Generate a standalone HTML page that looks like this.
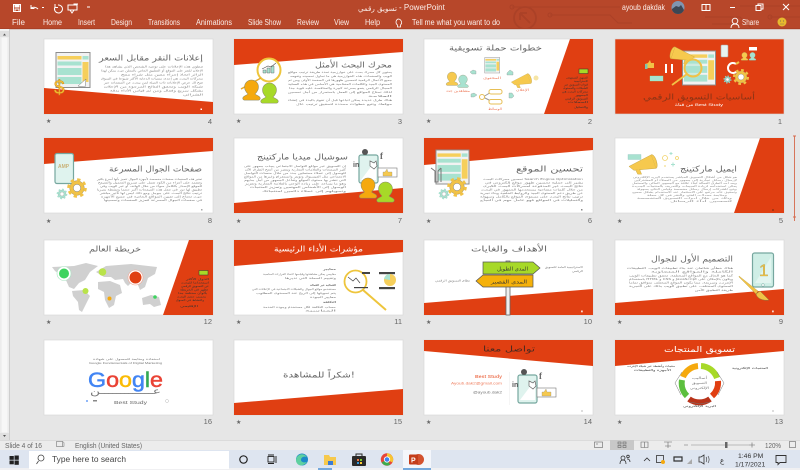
<!DOCTYPE html>
<html lang="en"><head><meta charset="utf-8"><title>PowerPoint</title>
<style>
html,body{margin:0;padding:0;width:800px;height:470px;overflow:hidden;background:#e6e6e6}
svg{display:block;filter:blur(.35px)}
text{font-family:"Liberation Sans","DejaVu Sans",sans-serif}
.ar{font-family:"DejaVu Sans","Liberation Sans",sans-serif}
.t{font-family:"DejaVu Sans","Liberation Sans",sans-serif;font-size:8px;fill:#666}
.b{font-family:"DejaVu Sans","Liberation Sans",sans-serif;font-size:2.800px;fill:#7a7a7a}
.k{font-family:"DejaVu Sans","Liberation Sans",sans-serif;font-size:2.800px;fill:#333}
.r{font-size:8px;fill:#fbeee9}
.n{font-size:7.500px;fill:#666;text-anchor:end}
.s{font-size:6px;fill:#666}
.st{font-size:7px;fill:#666}
</style></head><body>
<svg width="800" height="470" viewBox="0 0 800 470" xmlns="http://www.w3.org/2000/svg">
<defs>
<clipPath id="top"><rect width="800" height="29"/></clipPath>
<symbol id="person" viewBox="0 0 20 24" overflow="visible"><path d="M10 0a8 8 0 0 1 8 8c0 4-3 7-4 8c2 2 6 2 6 5c0 1-1 2-2 2H2c-1 0-2-1-2-2c0-3 4-3 6-5c-1-1-4-4-4-8a8 8 0 0 1 8-8z" stroke="#8a8a6a" stroke-width=".6"/></symbol>
<symbol id="gear" viewBox="-12 -12 24 24" overflow="visible"><circle r="8" stroke="#777" stroke-width=".4"/><circle r="9.200" fill="none" stroke="currentColor" stroke-width="3" stroke-dasharray="3.600 3.600"/><circle r="4" fill="#fff" stroke="#777" stroke-width=".5"/></symbol>
<symbol id="browser" viewBox="0 0 35 36" overflow="visible"><rect x=".5" y=".5" width="34" height="35" fill="#f2f2f2" stroke="#8d8d8d"/><rect x="2" y="4" width="24" height="3.500" fill="#f6cf5b"/><rect x="27" y="4" width="6" height="3.500" fill="#a8e2d0"/><rect x="2" y="9.500" width="24" height="4" fill="#a8e2d0"/><rect x="2" y="16" width="24" height="7" fill="#a8e2d0"/><rect x="2" y="25" width="24" height="7" fill="#a8e2d0"/><rect x="27" y="10" width="6" height="20" fill="#f6cf5b"/></symbol>
<symbol id="mega" viewBox="0 0 34 20" overflow="visible"><path d="M1 13L24 1l5 14L6 17z" fill="#f6c94e" stroke="#b99a3a" stroke-width=".4"/><path d="M24 1c4-1 8 12 5 14" fill="#f6c94e" stroke="#b99a3a" stroke-width=".5"/><path d="M8 17l2 4h4l-2-5" fill="#f6c94e" stroke="#b99a3a" stroke-width=".4"/></symbol>
<symbol id="social" viewBox="0 0 46 36" overflow="visible">
<rect x="7" y="5" width="19" height="28" rx="2" fill="#dff3ee" stroke="#76a79f" stroke-width="1.200"/>
<path d="M9 30L24 10v20z" fill="#fff"/>
<circle cx="13" cy="2" r="3" fill="#555"/><text x="28" y="9" font-size="9" font-weight="bold" fill="#666" style="font-family:'Liberation Serif',serif">f</text>
<text x="1" y="17" font-size="7" font-weight="bold" fill="#555">in</text>
<path d="M18 11l4 2l2-2l1 5l-3 3l-4-3z" fill="#fff" stroke="#666" stroke-width=".7"/>
<rect x="26" y="18" width="19" height="9" fill="#fff" stroke="#777" stroke-width=".6"/><path d="M31 26v-4h2l2-3l1 3h4v4z" fill="#f6c94e" stroke="#888" stroke-width=".3"/>
</symbol>
</defs>

<!-- app background -->
<rect width="800" height="470" fill="#e6e6e6"/>
<rect width="800" height="29" fill="#b7472a"/>
<rect y="28.400" width="800" height=".8" fill="#a23d24"/>
<!-- circuit pattern -->
<g fill="none" stroke="#ab4127" stroke-width="1" clip-path="url(#top)">
<path d="M512 7H620M550 15h60l8 8h14"/>
<circle cx="512" cy="7" r="2"/><circle cx="550" cy="15" r="2"/>
<circle cx="525" cy="18" r="11" stroke-width="1.800"/><path d="M520 13l10 10M520 13h7M520 13v7" stroke-width="1.800"/>
<path d="M705 17h35l12 12M740 6h60M770 17h30M712 24h20"/>
<circle cx="770" cy="17" r="2"/>
</g>
<!-- QAT -->
<g fill="none" stroke="#fff" stroke-width="1">
<rect x="13.500" y="4.500" width="7" height="7"/><rect x="15" y="4.500" width="4" height="2.500" fill="#fff"/><rect x="15" y="9" width="4" height="2.500"/>
<path d="M31 8a5 4 0 0 1 7 1M31 5v3.500h3.500"/><path d="M42 7.500h2"/>
<path d="M58 5a4 4 0 1 1-3 2M55 4v3.500h3"/>
<rect x="68" y="5" width="9" height="5"/><path d="M70 10l2 3l2-3M74 5v-1h4"/><path d="M87 7h3"/>
</g>
<text x="358" y="11" class="ar" font-size="7" fill="#fbeee9" textLength="39" lengthAdjust="spacingAndGlyphs">تسويق رقمي</text>
<text x="399" y="10" font-size="8" fill="#fbeee9">- PowerPoint</text>
<text x="622" y="10" font-size="8" fill="#fbeee9" textLength="43" lengthAdjust="spacingAndGlyphs">ayoub dakdak</text>
<circle cx="678" cy="7.500" r="6.500" fill="#8095b0"/><path d="M672 9l4-3 3 1 2-2 3 5a6.500 6.500 0 0 1-12 0z" fill="#3c4653"/>
<g fill="none" stroke="#fff" stroke-width="1"><rect x="702" y="4.500" width="8" height="6"/><path d="M706 4.500v6"/><path d="M730 7.500h5"/><rect x="756" y="5.500" width="5" height="5"/><path d="M758 5.500v-1.500h5v5h-2"/><path d="M783 4l6 6M789 4l-6 6"/></g>
<!-- ribbon tabs -->
<text x="12" y="25" class="r">File</text>
<text x="43" y="25" class="r" textLength="19" lengthAdjust="spacingAndGlyphs">Home</text>
<text x="78" y="25" class="r" textLength="17" lengthAdjust="spacingAndGlyphs">Insert</text>
<text x="111" y="25" class="r" textLength="21" lengthAdjust="spacingAndGlyphs">Design</text>
<text x="148" y="25" class="r" textLength="32" lengthAdjust="spacingAndGlyphs">Transitions</text>
<text x="196" y="25" class="r" textLength="36" lengthAdjust="spacingAndGlyphs">Animations</text>
<text x="248" y="25" class="r" textLength="33" lengthAdjust="spacingAndGlyphs">Slide Show</text>
<text x="297" y="25" class="r" textLength="22" lengthAdjust="spacingAndGlyphs">Review</text>
<text x="334" y="25" class="r" textLength="15" lengthAdjust="spacingAndGlyphs">View</text>
<text x="365" y="25" class="r" textLength="15" lengthAdjust="spacingAndGlyphs">Help</text>
<path d="M398 19a3.500 3.500 0 0 1 2.500 6v2h-3v-2a3.500 3.500 0 0 1 .5-6z" fill="none" stroke="#fff" stroke-width=".8"/>
<text x="412" y="25" class="r" textLength="88" lengthAdjust="spacingAndGlyphs">Tell me what you want to do</text>
<circle cx="735" cy="21" r="2.800" fill="none" stroke="#fff" stroke-width=".9"/><path d="M731 28c0-3 2-4 4-4s4 1 4 4" fill="none" stroke="#fff" stroke-width=".9"/>
<text x="742" y="25" class="r" textLength="17" lengthAdjust="spacingAndGlyphs">Share</text>
<circle cx="782" cy="22" r="4.500" fill="#e7b92e"/><circle cx="780.500" cy="21" r=".6" fill="#875"/><circle cx="783.500" cy="21" r=".6" fill="#875"/><path d="M780 24h4" stroke="#875" stroke-width=".5"/>

<!-- left scrollbar -->
<rect x="0" y="29" width="9" height="412" fill="#f1f1f1"/>
<rect x="9" y="29" width=".8" height="412" fill="#c9c9c9"/>
<rect x="0" y="31" width="9" height="6" fill="#e0e0e0"/><path d="M3 35.500l1.500-2 1.500 2z" fill="#555"/>
<rect x="0" y="433" width="9" height="7" fill="#e0e0e0"/><path d="M3 435l1.500 2 1.500-2z" fill="#555"/>
<rect x="1" y="37" width="7" height="396" fill="#f7f7f7" stroke="#ddd" stroke-width=".5"/>
<!-- right range mark -->
<path d="M794.500 136v85M793 136h3M793 217h3" stroke="#d5694c" stroke-width=".9" fill="none"/>

<!-- ROW 1 -->
<!-- slide 4 -->
<rect x="44" y="39" width="169" height="75" fill="#fff" stroke="#d6d6d6" stroke-width=".6"/>
<path d="M44 88L213 102V114H44z" fill="#e03f12"/>
<use href="#browser" x="55.500" y="52" width="35" height="36"/>
<path d="M78 86l8-7-1 8z" fill="#fff" stroke="#777" stroke-width=".5"/>
<text x="54" y="94" font-size="19" fill="#f4c534" stroke="#d68a20" stroke-width=".5">$</text>
<text x="99" y="60.500" class="t" textLength="104" lengthAdjust="spacingAndGlyphs">إعلانات النقر مقابل السعر</text>
<g>
<text class="b" x="105" y="67.500" textLength="98" lengthAdjust="spacingAndGlyphs">تنطوي هذه الإعلانات على توجيه الشخص الذي يشاهد هذا</text>
<text class="b" x="101" y="71.500" textLength="102" lengthAdjust="spacingAndGlyphs">الإعلان للنقر على الموقع أو التطبيق الخاص بالمعلن حيث يمكن لهذا</text>
<text class="b" x="121" y="75.500" textLength="82" lengthAdjust="spacingAndGlyphs">الزائر اتخاذ إجراء معين مثل شراء منتج</text>
<text class="b" x="101" y="79.500" textLength="102" lengthAdjust="spacingAndGlyphs">محركات البحث هي إحدى منصات الدعاية الأكثر شيوعا في السوق</text>
<text class="b" x="104" y="83.500" textLength="99" lengthAdjust="spacingAndGlyphs">تتيح لك عرض الإعلانات ذات الصلة لمن يبحث عن المنتجات عبر</text>
<text class="b" x="104" y="87.500" textLength="99" lengthAdjust="spacingAndGlyphs">شبكة الويب وتحقق النتائج المرجوة من الإعلان</text>
<text class="b" x="110" y="91.500" textLength="93" lengthAdjust="spacingAndGlyphs">بشكل سريع وفعال ومن ثم قياس الأداء بدقة</text>
<text class="b" x="183" y="95.500" textLength="20" lengthAdjust="spacingAndGlyphs">الشرائي</text>
</g>
<rect x="200.500" y="108.500" width="1.500" height="1.500" fill="#fff"/>
<text x="46" y="123" class="s">★</text><text x="212" y="124" class="n">4</text>

<!-- slide 3 -->
<rect x="234" y="39" width="169" height="75" fill="#fff" stroke="#d6d6d6" stroke-width=".6"/>
<path d="M234 39H403V52L234 65z" fill="#e03f12"/>
<text x="315" y="67.500" class="t" textLength="77" lengthAdjust="spacingAndGlyphs">محرك البحث الأمثل</text>
<g>
<text class="b" x="288" y="73" textLength="104" lengthAdjust="spacingAndGlyphs">يحتوي كل محرك بحث على خوارزمية تحدد طريقة ترتيب مواقع</text>
<text class="b" x="290" y="77" textLength="102" lengthAdjust="spacingAndGlyphs">الويب والصفحات. هذه الخوارزمية هي ما تحاول تحسينه وتفهمه</text>
<text class="b" x="288" y="81" textLength="104" lengthAdjust="spacingAndGlyphs">جميع الأعمال الرقمية لتحسين ظهورها في الصفحة الأولى ومن ثم</text>
<text class="b" x="288" y="85" textLength="104" lengthAdjust="spacingAndGlyphs">المحتوى الجيد والكلمات المفتاحية هي الأساس في هذه العملية</text>
<text class="b" x="289" y="89" textLength="103" lengthAdjust="spacingAndGlyphs">المجال الرقمي ينمو بسرعة كبيرة والمنافسة عليه قوية جدا</text>
<text class="b" x="288" y="93" textLength="104" lengthAdjust="spacingAndGlyphs">لذلك تحتاج المواقع إلى العمل باستمرار من أجل تحسين</text>
<text class="b" x="368" y="97" textLength="24" lengthAdjust="spacingAndGlyphs">العلامة</text>
<text class="b" x="288" y="101" textLength="104" lengthAdjust="spacingAndGlyphs">هناك طرق عديدة يمكن اتباعها قبل أن تقوم بالبدء في إنشاء</text>
<text class="b" x="296" y="105" textLength="96" lengthAdjust="spacingAndGlyphs">موقعك وتتبع خطوات محددة لتحقيق ترتيب عال</text>
</g>
<circle cx="269" cy="70" r="11.500" fill="#fff" stroke="#eec53c" stroke-width="2"/>
<path d="M261 78l-20 11" stroke="#e5a92c" stroke-width="1.500"/>
<path d="M263 73v-3h3v3zM267 73v-5h3v5zM271 73v-7h3v7z" fill="#a8e2d0" stroke="#555" stroke-width=".4"/><path d="M262 69l6-3 3 1 5-4" stroke="#555" fill="none" stroke-width=".6"/>
<use href="#person" x="242.500" y="80" width="18" height="21" fill="#f5a90e"/>
<use href="#person" x="260" y="83" width="19" height="21" fill="#a7d928"/>
<text x="236" y="123" class="s">★</text><text x="402" y="124" class="n">3</text>

<!-- slide 2 -->
<rect x="424" y="39" width="169" height="75" fill="#fff" stroke="#d6d6d6" stroke-width=".6"/>
<path d="M570 39H593V114H544z" fill="#e03f12"/>
<text x="449" y="50.500" class="t" textLength="93" lengthAdjust="spacingAndGlyphs">خطوات حملة تسويقية</text>
<use href="#browser" x="484.500" y="57" width="15.500" height="16.500"/>
<text x="483" y="79" class="ar" font-size="3.500" fill="#ee7a5a" textLength="18" lengthAdjust="spacingAndGlyphs">المحتوى</text>
<use href="#mega" x="510" y="73" width="25" height="14"/>
<circle cx="536" cy="78" r="2.500" fill="#f6e5a6"/>
<text x="516" y="91" class="ar" font-size="3.500" fill="#ee7a5a" textLength="13" lengthAdjust="spacingAndGlyphs">الإعلان</text>
<path d="M483 97l10-6M483 97l10 5" stroke="#999" stroke-width="1"/>
<rect x="489" y="89.500" width="13" height="4.500" rx="2" fill="#fff" stroke="#e7bf55" stroke-width="1"/>
<rect x="489" y="99.500" width="13" height="4.500" rx="2" fill="#fff" stroke="#e7bf55" stroke-width="1"/>
<circle cx="482" cy="97" r="2.500" fill="#fff" stroke="#e7bf55"/>
<text x="488" y="110" class="ar" font-size="3.500" fill="#ee7a5a" textLength="14" lengthAdjust="spacingAndGlyphs">الوسائط</text>
<use href="#person" x="446" y="72" width="12" height="14" fill="#f6c94e"/>
<use href="#person" x="457" y="75" width="12" height="13" fill="#a8e2d0"/>
<text x="446" y="92" class="ar" font-size="3.500" fill="#ee7a5a" textLength="24" lengthAdjust="spacingAndGlyphs">مشاهدين جدد</text>
<g fill="#a8e2d0" stroke="#888" stroke-width=".3"><path d="M470 72l3-2 3 1v3h-4z"/><path d="M507 73l3-3 3 2v3h-6z"/><path d="M471 94l3-1 3 2-3 2h-3z"/><path d="M509 93l3 0 2 3-2 2h-3z"/></g>
<rect x="579" y="69" width="9" height="4.500" fill="#a7d928" stroke="#333" stroke-width=".5"/>
<text class="k" x="566" y="78.500" textLength="22" lengthAdjust="spacingAndGlyphs">الجمهور المستهدف</text>
<text class="k" x="574" y="82" textLength="14" lengthAdjust="spacingAndGlyphs">الاستراتيجية</text>
<text class="k" x="564" y="85.500" textLength="24" lengthAdjust="spacingAndGlyphs">قنوات التسويق عبر</text>
<text class="k" x="563" y="89" textLength="25" lengthAdjust="spacingAndGlyphs">الشبكات والمحتوى</text>
<text class="k" x="562" y="92.500" textLength="26" lengthAdjust="spacingAndGlyphs">محركات البحث هي</text>
<text class="k" x="575" y="96" textLength="13" lengthAdjust="spacingAndGlyphs">الجمهور</text>
<text class="k" x="565" y="99.500" textLength="23" lengthAdjust="spacingAndGlyphs">التسويق الرقمي</text>
<text class="k" x="568" y="103" textLength="20" lengthAdjust="spacingAndGlyphs">الحملات</text>
<text class="k" x="574" y="108" textLength="14" lengthAdjust="spacingAndGlyphs">والتحليل</text>
<text x="426" y="123" class="s">★</text><text x="592" y="124" class="n">2</text>

<!-- slide 1 -->
<rect x="615" y="39" width="169" height="75" fill="#e03f12" stroke="#d6d6d6" stroke-width=".6"/>
<use href="#browser" x="682" y="50" width="34" height="36"/>
<use href="#mega" transform="translate(696 46) scale(-1 1)" width="30" height="17" x="0" y="0"/>
<circle cx="693" cy="68" r="8.500" fill="#a8e2d0" fill-opacity=".5" stroke="#f1c246" stroke-width="2"/>
<path d="M687 74l-15 11" stroke="#f1c246" stroke-width="1.800"/>
<rect x="721" y="45" width="7" height="12" rx="1" fill="#e8f4f1" stroke="#aaa" stroke-width=".6"/>
<rect x="749" y="47" width="8" height="3.500" fill="#fff"/>
<use href="#person" x="741" y="52" width="7" height="9" fill="#f6c94e"/>
<use href="#person" x="749" y="52" width="7" height="9" fill="#a8e2d0"/>
<path d="M645 64l3-1 2-3 1 3h3v5h-9z" fill="#f1c246"/><rect x="645" y="64" width="2.500" height="5" fill="#7fc4b1"/>
<path d="M666 64v9M672 64v9" stroke="#fff" stroke-width="2"/>
<rect x="650" y="76" width="13" height="5" fill="#a8e2d0" stroke="#7fb" stroke-width=".3"/>
<path d="M736 64a5 5 0 1 0 1 7" fill="none" stroke="#fff" stroke-width="2"/><path d="M736 64l3-2" stroke="#f1c246" stroke-width="2"/>
<use href="#gear" x="732" y="68" width="18" height="18" fill="#f1c246" color="#f1c246"/>
<use href="#gear" x="723" y="75" width="9" height="9" fill="#8fd3c5" color="#8fd3c5"/>
<text x="643" y="99.500" class="t" style="fill:#8a3416" textLength="112" lengthAdjust="spacingAndGlyphs">أساسيات التسويق الرقمي</text>
<text x="675" y="106" font-size="4" fill="#fff" textLength="48" lengthAdjust="spacingAndGlyphs">من قناة Best Study</text>
<text x="782" y="124" class="n">1</text>

<!-- ROW 2 -->
<!-- slide 8 -->
<rect x="44" y="138" width="169" height="75" fill="#fff" stroke="#d6d6d6" stroke-width=".6"/>
<path d="M44 138H213V151L44 164z" fill="#e03f12"/>
<rect x="55" y="153.500" width="18.500" height="30" rx="2" fill="#dff3ee" stroke="#76a79f" stroke-width="1.200"/>
<text x="58" y="168" font-size="5" font-weight="bold" fill="#c9b37a">AMP</text>
<use href="#gear" x="66" y="177" width="22" height="22" fill="#f1c246" color="#f1c246"/>
<use href="#gear" x="56" y="188" width="12" height="12" fill="#a8e2d0" color="#a8e2d0"/>
<text x="109" y="171.500" class="t" textLength="93" lengthAdjust="spacingAndGlyphs">صفحات الجوال المسرعة</text>
<g>
<text class="b" x="97" y="180" textLength="105" lengthAdjust="spacingAndGlyphs">تعتبر هذه الصفحات صفحات مخصصة لأجهزة الجوال تتميز بأنها أسرع بكثير</text>
<text class="b" x="98" y="183.500" textLength="104" lengthAdjust="spacingAndGlyphs">وتعتمد على أجزاء من الكود تعمل على تسريع التحميل والتصفح</text>
<text class="b" x="100" y="187" textLength="102" lengthAdjust="spacingAndGlyphs">للموقع الإصدار بالكامل سواء من خلال الهاتف أو عبر الويب وفي</text>
<text class="b" x="97" y="190.500" textLength="105" lengthAdjust="spacingAndGlyphs">تطبيق لها دور في جعل هذه الصفحات أكبر حجما ونشطة بصريا</text>
<text class="b" x="100" y="194" textLength="102" lengthAdjust="spacingAndGlyphs">ترتيب نتائج البحث على جوجل ومع ذلك ليس لها تأثير مباشر</text>
<text class="b" x="101" y="197.500" textLength="101" lengthAdjust="spacingAndGlyphs">حيث تحتاج إلى تعيين المواقع الخاصة في جميع الأجهزة</text>
<text class="b" x="104" y="201" textLength="98" lengthAdjust="spacingAndGlyphs">في صفحات الجوال المسرعة لتعزيز الصفحات وتحسينها</text>
</g>
<rect x="201" y="209" width="1.500" height="1.500" fill="#aaa"/>
<text x="46" y="223" class="s">★</text><text x="212" y="223" class="n">8</text>

<!-- slide 7 -->
<rect x="234" y="138" width="169" height="75" fill="#fff" stroke="#d6d6d6" stroke-width=".6"/>
<path d="M234 203L403 188V213H234z" fill="#e03f12"/>
<text x="257" y="159.500" class="t" textLength="91" lengthAdjust="spacingAndGlyphs">سوشيال ميديا ماركتينج</text>
<g>
<text class="b" x="244" y="167" textLength="102" lengthAdjust="spacingAndGlyphs">إن التسويق عبر مواقع التواصل الاجتماعي يجذب جمهور على</text>
<text class="b" x="245" y="170.500" textLength="101" lengthAdjust="spacingAndGlyphs">كثير الصفحات والعلامات التجارية ويعتبر من أنجح الطرق الآن</text>
<text class="b" x="244" y="174" textLength="102" lengthAdjust="spacingAndGlyphs">للوصول إلى عملاء محتملين جدد من خلال منصات التواصل</text>
<text class="b" x="244" y="177.500" textLength="102" lengthAdjust="spacingAndGlyphs">الاجتماعي مثل الفيسبوك وتويتر وانستغرام وغيرها من المواقع</text>
<text class="b" x="244" y="181" textLength="102" lengthAdjust="spacingAndGlyphs">التي تنشر بها محتوى الموقع وتفاعل الجمهور من أجل جذبهم</text>
<text class="b" x="245" y="184.500" textLength="101" lengthAdjust="spacingAndGlyphs">وهو ما يساعد على زيادة الوعي بالعلامة التجارية وتعزيز</text>
<text class="b" x="250" y="188" textLength="96" lengthAdjust="spacingAndGlyphs">الوصول إلى الأشخاص المهتمين وتعزيز المنتجات</text>
<text class="b" x="262" y="192" textLength="84" lengthAdjust="spacingAndGlyphs">وتحويلهم إلى عملاء دائمين لمنتجاتك</text>
</g>
<use href="#social" x="352" y="150" width="46" height="36"/>
<use href="#person" x="359" y="178" width="18" height="21" fill="#f5a90e"/>
<use href="#person" x="376" y="182" width="19" height="21" fill="#a7d928"/>
<text x="236" y="223" class="s">★</text><text x="402" y="223" class="n">7</text>

<!-- slide 6 -->
<rect x="424" y="138" width="169" height="75" fill="#fff" stroke="#d6d6d6" stroke-width=".6"/>
<path d="M424 138H593V150L424 165z" fill="#e03f12"/>
<use href="#browser" x="435.500" y="149" width="34" height="36"/>
<path d="M431 168l4 3v11h3v-11l3-3M441 168v14" stroke="#777" stroke-width="1" fill="none"/>
<use href="#gear" x="446" y="176" width="22" height="22" fill="#f1c246" color="#f1c246"/>
<use href="#gear" x="438" y="188" width="12" height="12" fill="#a8e2d0" color="#a8e2d0"/>
<text x="516" y="171.500" class="t" textLength="67" lengthAdjust="spacingAndGlyphs">تحسين الموقع</text>
<g>
<text class="b" x="483" y="180" textLength="100" lengthAdjust="spacingAndGlyphs">تحسين محركات البحث Search Engine Optimization</text>
<text class="b" x="485" y="183.500" textLength="98" lengthAdjust="spacingAndGlyphs">يشير إلى عملية تحسين ظهور موقع إلكتروني في</text>
<text class="b" x="483" y="187" textLength="100" lengthAdjust="spacingAndGlyphs">نتائج البحث غير المدفوعة لمحركات البحث الكبرى</text>
<text class="b" x="481" y="190.500" textLength="102" lengthAdjust="spacingAndGlyphs">من خلال كلمات مفتاحية يستخدمها الجمهور في البحث</text>
<text class="b" x="480" y="194" textLength="103" lengthAdjust="spacingAndGlyphs">عن طريق دعم المحتوى الجيد والروابط الخلفية وبناء تجربة</text>
<text class="b" x="480" y="197.500" textLength="103" lengthAdjust="spacingAndGlyphs">ترتيب نتائج البحث على مستوى الموقع بالكامل وسهولة</text>
<text class="b" x="480" y="201" textLength="103" lengthAdjust="spacingAndGlyphs">والتحليلات في المواقع فهو عامل مهم في النجاح</text>
</g>
<rect x="581" y="209" width="1.500" height="1.500" fill="#888"/>
<text x="426" y="223" class="s">★</text><text x="592" y="223" class="n">6</text>

<!-- slide 5 -->
<rect x="615" y="138" width="169" height="75" fill="#fff" stroke="#d6d6d6" stroke-width=".6"/>
<path d="M760 138H784V213H734z" fill="#e03f12"/>
<use href="#mega" x="628" y="153" width="33" height="21"/>
<rect x="628" y="154.500" width="13" height="5" fill="#a8e2d0" stroke="#8bb" stroke-width=".3"/>
<circle cx="665" cy="158" r="2.500" fill="#fff" stroke="#f1d368" stroke-width=".8"/><circle cx="677" cy="158" r="1.500" fill="none" stroke="#f1d368" stroke-width=".8"/>
<path d="M671 152v3M669.500 153.500h3M673 162.500v4M671 164.500h4" stroke="#a8e2d0" stroke-width="1"/>
<circle cx="665" cy="166" r="1" fill="#f6e5a6"/>
<text x="680" y="171.500" class="t" textLength="57" lengthAdjust="spacingAndGlyphs">ايميل ماركتينج</text>
<g>
<text class="b" style="font-size:2.400px;fill:#8c8c8c" x="633" y="178" textLength="104" lengthAdjust="spacingAndGlyphs">هو شكل من أشكال التسويق المباشر يستخدم البريد الإلكتروني</text>
<text class="b" style="font-size:2.400px;fill:#8c8c8c" x="634" y="181" textLength="103" lengthAdjust="spacingAndGlyphs">لإرسال رسائل تجارية إلى جمهور من العملاء أو المشتركين</text>
<text class="b" style="font-size:2.400px;fill:#8c8c8c" x="632" y="184" textLength="105" lengthAdjust="spacingAndGlyphs">ويعد أحد الطرق الفعالة لبناء علاقة مع الجمهور الحالي والمحتمل</text>
<text class="b" style="font-size:2.400px;fill:#8c8c8c" x="632" y="187" textLength="105" lengthAdjust="spacingAndGlyphs">يمكن استخدامه لزيادة المبيعات والتعريف بالمنتجات الجديدة</text>
<text class="b" style="font-size:2.400px;fill:#8c8c8c" x="637" y="190" textLength="100" lengthAdjust="spacingAndGlyphs">ويتيح للشركات إرسال رسائل مخصصة وقياس النتائج بسهولة</text>
<text class="b" style="font-size:2.400px;fill:#8c8c8c" x="632" y="193" textLength="105" lengthAdjust="spacingAndGlyphs">وتحقيق عائد مرتفع على الاستثمار عند الاستخدام بشكل صحيح</text>
<text class="b" style="font-size:2.400px;fill:#8c8c8c" x="647" y="196" textLength="80" lengthAdjust="spacingAndGlyphs">ومتابعة معدلات الفتح والنقر في كل حملة</text>
<text class="b" style="font-size:2.400px;fill:#8c8c8c" x="637" y="199" textLength="95" lengthAdjust="spacingAndGlyphs">وذلك من خلال أدوات التسويق المتخصصة</text>
<text class="b" style="font-size:2.400px;fill:#8c8c8c" x="670" y="202" textLength="62" lengthAdjust="spacingAndGlyphs">لتحسين أداء الرسائل</text>
</g>
<rect x="772" y="209" width="2" height="2" fill="#a8350f"/>
<text x="617" y="223" class="s">★</text><text x="783" y="223" class="n">5</text>

<!-- ROW 3 -->
<!-- slide 12 -->
<rect x="44" y="240" width="169" height="75" fill="#fff" stroke="#d6d6d6" stroke-width=".6"/>
<path d="M189 240H213V315H163z" fill="#e03f12"/>
<text x="89" y="251.500" class="t" textLength="52" lengthAdjust="spacingAndGlyphs">خريطة العالم</text>
<g fill="#d0d0d0">
<path d="M52 267l22-1 12-3 12 3-8 6-5 8-6 3-5 6-5-2-4-9-10-7z"/>
<path d="M72 291l12-1 6 6-4 8-4 8-3-2-1-8-5-6z"/>
<path d="M96 272l10-6 25-2 26 3-2 7-7 4-3 9-5 3-2-5-6-3-4 4-3-3-2-4-8 1-4-3-7 0z"/>
<path d="M98 282l12-1 10 4 2 8-6 3-2 9-5 3-4-8-1-8-6-3z"/>
<path d="M142 298l9-3 8 2 2 8-7 2-4-3-7 1z"/>
</g>
<circle cx="64" cy="273.500" r="7" fill="#fff" stroke="#a8e2c0" stroke-width=".6"/><circle cx="64" cy="273.500" r="5" fill="#3ed35f"/>
<circle cx="102.500" cy="272" r="3.800" fill="#b9e34a"/>
<circle cx="135.500" cy="277.500" r="7.500" fill="#fff" stroke="#eda493" stroke-width=".6"/><circle cx="135.500" cy="277.500" r="6" fill="#e03f12"/>
<circle cx="85.500" cy="291" r="3" fill="#b9e34a"/><circle cx="109.500" cy="298.500" r="2" fill="#f5a90e"/><circle cx="155" cy="297" r="1.800" fill="#3ed35f"/>
<rect x="199" y="270.500" width="9" height="4.500" fill="#a7d928" stroke="#333" stroke-width=".5"/>
<text class="k" x="186" y="280" textLength="23" lengthAdjust="spacingAndGlyphs">الدول الأكثر</text>
<text class="k" x="181" y="283.500" textLength="28" lengthAdjust="spacingAndGlyphs">استخداما للبحث</text>
<text class="k" x="181" y="287" textLength="28" lengthAdjust="spacingAndGlyphs">عن التسويق الرقمي</text>
<text class="k" x="180" y="290.500" textLength="28" lengthAdjust="spacingAndGlyphs">تظهر في الخريطة</text>
<text class="k" x="178" y="294" textLength="29" lengthAdjust="spacingAndGlyphs">بألوان مختلفة جدا</text>
<text class="k" x="177" y="297.500" textLength="29" lengthAdjust="spacingAndGlyphs">بحسب حجم البحث</text>
<text class="k" x="176" y="301" textLength="28" lengthAdjust="spacingAndGlyphs">والنشاط في السوق</text>
<text class="k" x="180" y="307" textLength="18" lengthAdjust="spacingAndGlyphs">الإقليمي</text>
<text x="46" y="324" class="s">★</text><text x="212" y="324" class="n">12</text>

<!-- slide 11 -->
<rect x="234" y="240" width="169" height="75" fill="#fff" stroke="#d6d6d6" stroke-width=".6"/>
<path d="M234 240H403V252L234 266z" fill="#e03f12"/>
<text x="274" y="251.500" class="t" style="fill:#fff" textLength="89" lengthAdjust="spacingAndGlyphs">مؤشرات الأداء الرئيسية</text>
<g>
<text class="b" style="font-weight:bold" x="323" y="270" textLength="13" lengthAdjust="spacingAndGlyphs">معايير</text>
<text class="b" x="263" y="275" textLength="73" lengthAdjust="spacingAndGlyphs">مقاييس يمكن مشاهدتها وقياسها لاتخاذ القرارات المناسبة</text>
<text class="b" x="285" y="279" textLength="51" lengthAdjust="spacingAndGlyphs">وتقييم الحملة التي تديرها</text>
<text class="b" style="font-weight:bold" x="310" y="286" textLength="26" lengthAdjust="spacingAndGlyphs">الفعالية غير الفعالة</text>
<text class="b" x="252" y="290" textLength="84" lengthAdjust="spacingAndGlyphs">مستخدمو مواقع الجوال والشبكات الاجتماعية في الإعلانات التي</text>
<text class="b" x="256" y="294" textLength="80" lengthAdjust="spacingAndGlyphs">يتم تحويلها إلى الربح عند المستوى المطلوب</text>
<text class="b" x="310" y="298" textLength="26" lengthAdjust="spacingAndGlyphs">معايير الجودة</text>
<text class="b" style="font-weight:bold" x="323" y="303" textLength="13" lengthAdjust="spacingAndGlyphs">التكلفة</text>
<text class="b" x="263" y="308" textLength="73" lengthAdjust="spacingAndGlyphs">حساب التكلفة لكل مستخدم وجودة الخدمة</text>
<text class="b" x="305" y="311.500" textLength="31" lengthAdjust="spacingAndGlyphs">المناسبة</text>
</g>
<circle cx="355.500" cy="281.500" r="11" fill="#fff" stroke="#eec53c" stroke-width="1.800"/>
<path d="M363 290l23 20" stroke="#eec53c" stroke-width="2"/>
<path d="M348 277l5 4 3-3 4 5" stroke="#444" fill="none" stroke-width=".7"/>
<rect x="362" y="272" width="8" height="2" fill="#444"/><rect x="354" y="287" width="14" height="1.200" fill="#444"/>
<rect x="379" y="272" width="16" height="2.200" fill="#444"/><rect x="379" y="287" width="16" height="2.200" fill="#444"/>
<circle cx="390" cy="280" r="6" fill="#f6cf5b"/><path d="M390 280v-6a6 6 0 0 0-6 5z" fill="#a8e2d0"/>
<text x="236" y="324" class="s">★</text><text x="402" y="324" class="n">11</text>

<!-- slide 10 -->
<rect x="424" y="240" width="169" height="75" fill="#fff" stroke="#d6d6d6" stroke-width=".6"/>
<path d="M424 303L593 289V315H424z" fill="#e03f12"/>
<text x="471" y="251.500" class="t" textLength="76" lengthAdjust="spacingAndGlyphs">الأهداف والغايات</text>
<rect x="506" y="261" width="4" height="54" fill="#eee" stroke="#666" stroke-width=".8"/>
<path d="M483 262H533L540 268L533 274H483z" fill="#a7d928" stroke="#555" stroke-width=".7"/>
<path d="M483 275H533V287H483L476 281z" fill="#f5b10a" stroke="#555" stroke-width=".7"/>
<text x="497" y="270.500" class="ar" font-size="5" fill="#333" textLength="31" lengthAdjust="spacingAndGlyphs">المدى الطويل</text>
<text x="491" y="283.500" class="ar" font-size="5" fill="#333" textLength="36" lengthAdjust="spacingAndGlyphs">المدى القصير</text>
<text x="545" y="268" class="b" textLength="38" lengthAdjust="spacingAndGlyphs">الاستراتيجية العامة للتسويق</text>
<text x="572" y="272" class="b" textLength="11" lengthAdjust="spacingAndGlyphs">الرقمي</text>
<text x="435" y="281.500" class="b" textLength="35" lengthAdjust="spacingAndGlyphs">نظام التسويق الرقمي</text>
<rect x="581" y="310.500" width="1.800" height="1.800" fill="#fff" opacity=".8"/>
<text x="426" y="324" class="s">★</text><text x="592" y="324" class="n">10</text>

<!-- slide 9 -->
<rect x="615" y="240" width="169" height="75" fill="#fff" stroke="#d6d6d6" stroke-width=".6"/>
<path d="M615 303L784 289V315H615z" fill="#e03f12"/>
<text x="651" y="261.500" class="t" textLength="82" lengthAdjust="spacingAndGlyphs">التصميم الأول للجوال</text>
<g>
<text class="b" x="627" y="269" textLength="106" lengthAdjust="spacingAndGlyphs">هناك خطأي شائعان عند بناء تطبيقات الويب. التطبيقات</text>
<text class="b" x="651" y="272.500" textLength="82" lengthAdjust="spacingAndGlyphs">الكاملة والمواقع المتجاوبة</text>
<text class="b" x="629" y="276.500" textLength="104" lengthAdjust="spacingAndGlyphs">كما هو الحال مع المواقع المختلفة، تحقق تطبيقات الويب</text>
<text class="b" x="629" y="280" textLength="104" lengthAdjust="spacingAndGlyphs">باستخدام HTML و CSS و JavaScript ويكون بالإمكان على</text>
<text class="b" x="629" y="283.500" textLength="104" lengthAdjust="spacingAndGlyphs">الإنترنت وسريعة، مما يكون الموقع المختلف متوافق تماما</text>
<text class="b" x="629" y="287" textLength="104" lengthAdjust="spacingAndGlyphs">المحتوى المختلف، على تطبيق الويب بذلك على التجربة</text>
<text class="b" x="695" y="291" textLength="38" lengthAdjust="spacingAndGlyphs">طريقة التطبيق الآمن</text>
</g>
<rect x="752.500" y="253" width="21" height="34" rx="2" fill="#cfeee6" stroke="#76a79f" stroke-width="1.200"/>
<path d="M755 283L771 257V283z" fill="#e2f5f0"/>
<text x="759" y="276" font-size="17" fill="#f1c246" stroke="#a8953f" stroke-width=".3">1</text>
<circle cx="763" cy="285" r="1.300" fill="#fff" stroke="#76a79f" stroke-width=".5"/>
<path d="M739 276l19 15-2 3-17-17z" fill="#f1c246" stroke="#a8953f" stroke-width=".3"/>
<path d="M756 294l4-3 9 9c-5 1-12-1-13-6z" fill="#f1c246" stroke="#8a7a40" stroke-width=".5"/>
<rect x="772" y="310.500" width="1.800" height="1.800" fill="#fff" opacity=".8"/>
<text x="617" y="324" class="s">★</text><text x="783" y="324" class="n">9</text>

<!-- ROW 4 -->
<!-- slide 16 -->
<rect x="44" y="340" width="169" height="75" fill="#fff" stroke="#d6d6d6" stroke-width=".6"/>
<text x="93" y="360" class="b" textLength="67" lengthAdjust="spacingAndGlyphs">استفادة ومتابعة للحصول على شهادة</text>
<text x="89" y="364" font-size="3" fill="#777" textLength="73" lengthAdjust="spacingAndGlyphs">Google Fundamentals of Digital Marketing</text>
<text x="88" y="387" font-size="21" stroke-width=".5" textLength="75" lengthAdjust="spacingAndGlyphs" style="font-family:'Liberation Sans',sans-serif"><tspan fill="#4285f4" stroke="#4285f4">G</tspan><tspan fill="#ea4335" stroke="#ea4335">o</tspan><tspan fill="#fbbc05" stroke="#fbbc05">o</tspan><tspan fill="#4285f4" stroke="#4285f4">g</tspan><tspan fill="#34a853" stroke="#34a853">l</tspan><tspan fill="#ea4335" stroke="#ea4335">e</tspan></text>
<text x="90" y="394" class="ar" font-size="9" fill="#777" textLength="71" lengthAdjust="spacingAndGlyphs">عـــــــــــــن</text>
<text x="114" y="404" font-size="4.800" fill="#666" textLength="33" lengthAdjust="spacingAndGlyphs">Best Study</text>
<circle cx="87" cy="401" r=".9" fill="#4285f4"/><rect x="93" y="400" width="4" height="1.500" fill="#888"/><circle cx="167" cy="401" r="1.500" fill="none" stroke="#bbb" stroke-width=".5"/>
<text x="212" y="424" class="n">16</text>

<!-- slide 15 -->
<rect x="234" y="340" width="169" height="75" fill="#fff" stroke="#d6d6d6" stroke-width=".6"/>
<path d="M234 403L403 389V415H234z" fill="#e03f12"/>
<text x="283" y="377.500" class="t" textLength="72" lengthAdjust="spacingAndGlyphs">شكراً للمشاهدة!</text>
<text x="236" y="424" class="s">★</text><text x="402" y="424" class="n">15</text>

<!-- slide 14 -->
<rect x="424" y="340" width="169" height="75" fill="#fff" stroke="#d6d6d6" stroke-width=".6"/>
<path d="M424 340H593V366L424 351z" fill="#e03f12"/>
<text x="483" y="351.500" class="t" style="fill:#4a2a20" textLength="52" lengthAdjust="spacingAndGlyphs">تواصل معنا</text>
<text x="475" y="378" font-size="4.800" font-weight="bold" fill="#ee7a5a" textLength="27" lengthAdjust="spacingAndGlyphs">Best Study</text>
<text x="451" y="384.500" font-size="3.800" fill="#ee7a5a" textLength="51" lengthAdjust="spacingAndGlyphs">Ayoub.dak2@gmail.com</text>
<text x="473" y="393.500" font-size="3.800" fill="#777" textLength="29" lengthAdjust="spacingAndGlyphs">@ayoub.dak2</text>
<path d="M509.500 372v33" stroke="#eee" stroke-width=".6"/>
<use href="#social" x="511" y="370" width="46" height="36"/>
<rect x="581" y="410.500" width="2" height="1" fill="#bbb"/>
<text x="426" y="424" class="s">★</text><text x="592" y="424" class="n">14</text>

<!-- slide 13 -->
<rect x="615" y="340" width="169" height="75" fill="#fff" stroke="#d6d6d6" stroke-width=".6"/>
<path d="M615 340H784V351L615 366z" fill="#e03f12"/>
<text x="664" y="352" class="t" style="fill:#fff" textLength="71" lengthAdjust="spacingAndGlyphs">تسويق المنتجات</text>
<g fill="none" stroke-width="6">
<path d="M701 366A18 18 0 0 1 717 378" stroke="#a7d928"/>
<path d="M718 381A18 18 0 0 1 712 396" stroke="#e03f12"/>
<path d="M710 399A18 18 0 0 1 689 399" stroke="#b8331a"/>
<path d="M687 396A18 18 0 0 1 682 380" stroke="#5cbf3e"/>
<path d="M683 377A18 18 0 0 1 698 366" stroke="#f5a90e"/>
</g>
<path d="M717 372l7 11-6 12M682 372l-7 11 6 12M690 402l10 2 10-2" fill="none" stroke="#777" stroke-width=".5"/>
<text x="692" y="379" class="b" style="font-size:3.200px" textLength="15" lengthAdjust="spacingAndGlyphs">أساليب</text>
<text x="692" y="384" class="b" style="font-size:3.200px" textLength="15" lengthAdjust="spacingAndGlyphs">التسويق</text>
<text x="690" y="389" class="b" style="font-size:3.200px" textLength="19" lengthAdjust="spacingAndGlyphs">الإلكتروني</text>
<text x="732" y="369" class="k" textLength="36" lengthAdjust="spacingAndGlyphs">المنتجات الإلكترونية</text>
<text x="627" y="367" class="k" textLength="48" lengthAdjust="spacingAndGlyphs">منتجات وأنشطة عبر شبكة الإنترنت</text>
<text x="634" y="371" class="k" textLength="37" lengthAdjust="spacingAndGlyphs">الأجهزة والتطبيقات</text>
<text x="683" y="407" class="k" textLength="33" lengthAdjust="spacingAndGlyphs">البريد الإلكتروني</text>
<rect x="772" y="410.500" width="2" height="1" fill="#bbb"/>
<text x="617" y="424" class="s">★</text><text x="783" y="424" class="n">13</text>

<!-- status bar -->
<rect y="440" width="800" height="10" fill="#ececec"/>
<rect y="440" width="800" height=".7" fill="#d4d4d4"/>
<text x="5" y="448" class="st" textLength="37" lengthAdjust="spacingAndGlyphs">Slide 4 of 16</text>
<rect x="56.500" y="441.500" width="6" height="5" fill="none" stroke="#777" stroke-width=".6"/><path d="M62.500 441.500l1.500 1v4h-1.500" fill="none" stroke="#777" stroke-width=".5"/>
<text x="75" y="448" class="st" textLength="67" lengthAdjust="spacingAndGlyphs">English (United States)</text>
<rect x="610" y="440" width="24" height="10" fill="#c8c8c8"/>
<g fill="none" stroke="#666" stroke-width=".6">
<rect x="594.500" y="442" width="8" height="5.500"/><path d="M596 444h2"/>
<rect x="618" y="442" width="3" height="2"/><rect x="623" y="442" width="3" height="2"/><rect x="618" y="445.500" width="3" height="2"/><rect x="623" y="445.500" width="3" height="2"/>
<path d="M641 442h3.500v5.500h-3.500zM644.500 442h3.500v5.500h-3.500z"/>
<path d="M664 442h8M668 442v4M665 446h6M668 446v2"/>
<path d="M684 445h4M749 445h6M752 442.500v5"/>
<rect x="789.500" y="441.500" width="6" height="6"/>
</g>
<path d="M691 445h58" stroke="#aaa" stroke-width=".7"/>
<rect x="725" y="442" width="2.500" height="6" fill="#666"/>
<text x="765" y="448" class="st" textLength="16" lengthAdjust="spacingAndGlyphs">120%</text>

<!-- taskbar -->
<rect y="450" width="800" height="20" fill="#dee5f0"/>
<rect y="468" width="800" height="2" fill="#f0f0f2"/>
<g fill="#222"><rect x="9.500" y="456" width="4.300" height="3.800"/><rect x="14.500" y="455.500" width="4.300" height="4.300"/><rect x="9.500" y="460.500" width="4.300" height="3.800"/><rect x="14.500" y="460.500" width="4.300" height="4.300"/></g>
<rect x="29" y="451" width="200" height="18" fill="#fff"/>
<circle cx="41" cy="458" r="3" fill="none" stroke="#444" stroke-width=".8"/><path d="M38.500 461l-2 3" stroke="#444" stroke-width=".8"/>
<text x="52" y="462" font-size="8" fill="#444" textLength="74" lengthAdjust="spacingAndGlyphs">Type here to search</text>
<circle cx="243.500" cy="459.500" r="3.700" fill="none" stroke="#222" stroke-width="1.200"/>
<g fill="none" stroke="#222" stroke-width=".9"><rect x="268" y="456.500" width="6" height="5.500"/><path d="M268 455h6M268 463.500h6M276 456v7"/></g>
<circle cx="302" cy="459.500" r="6" fill="#1b89c9"/><path d="M296 460a6 6 0 0 1 11-3c-3-1-6 0-6 3 0 2 3 3 6 2-2 3-6 4-8 3-2-1-3-3-3-5z" fill="#5ed0a0"/>
<path d="M324 455h5l1 2h6v8h-12z" fill="#f6c94e"/><rect x="328" y="461" width="5" height="4" fill="#3a7bd5"/>
<rect x="352" y="456" width="14" height="10" rx="1" fill="#2a2a2a"/><path d="M356 456v-2h6v2" fill="none" stroke="#2a2a2a"/><rect x="357" y="459" width="2" height="2" fill="#e74"/><rect x="360" y="459" width="2" height="2" fill="#7c3"/><rect x="357" y="462" width="2" height="2" fill="#39d"/><rect x="360" y="462" width="2" height="2" fill="#fc3"/>
<circle cx="387" cy="459.500" r="6.200" fill="#e6453a"/><path d="M387 459.500l-5.300 3a6.200 6.200 0 0 0 8.500 2.300z" fill="#3cab4d"/><path d="M387 453.300a6.200 6.200 0 0 1 5.400 9.200l-5.400-3z" fill="#f7c531"/><circle cx="387" cy="459.500" r="2.700" fill="#3e82ee" stroke="#fff" stroke-width=".8"/>
<rect x="318" y="468" width="14" height="2" fill="#74a8dd"/><rect x="403" y="450" width="28" height="20" fill="#f4f6fb"/><rect x="403" y="468" width="28" height="2" fill="#74a8dd"/>
<circle cx="418.500" cy="459.500" r="5.500" fill="#d35230"/><rect x="409" y="454.500" width="9" height="10" rx="1" fill="#c43e1c"/><text x="411" y="462.500" font-size="7" font-weight="bold" fill="#fff">P</text>
<g fill="none" stroke="#333" stroke-width=".8"><circle cx="623" cy="458" r="2"/><path d="M620 464c0-3 1-4 3-4s3 1 3 4"/><circle cx="628" cy="456.500" r="1.300"/><path d="M627 459c2 0 3 1 3 3"/>
<path d="M644 461l3-3 3 3"/><rect x="656.500" y="455.500" width="7" height="7"/><path d="M674 457h8v4h-8z" stroke-width="1.200"/></g>
<circle cx="663" cy="462" r="2" fill="#f5a90e"/>
<path d="M687 464l5-5v5z" fill="#aaa"/><path d="M699 457h2l3-2v9l-3-2h-2z" fill="none" stroke="#333" stroke-width=".8"/><path d="M706 457c1 1 1 4 0 5M708 456c1.500 2 1.500 5 0 7" fill="none" stroke="#333" stroke-width=".6"/>
<text x="720" y="463" class="ar" font-size="7" fill="#333">ع</text>
<text x="738" y="458" font-size="6.800" fill="#333">1:46 PM</text>
<text x="735" y="466.500" font-size="6.800" fill="#333">1/17/2021</text>
<path d="M776 455.500h10v7h-6l-2 2v-2h-2z" fill="none" stroke="#333" stroke-width=".9"/>
</svg>
</body></html>
